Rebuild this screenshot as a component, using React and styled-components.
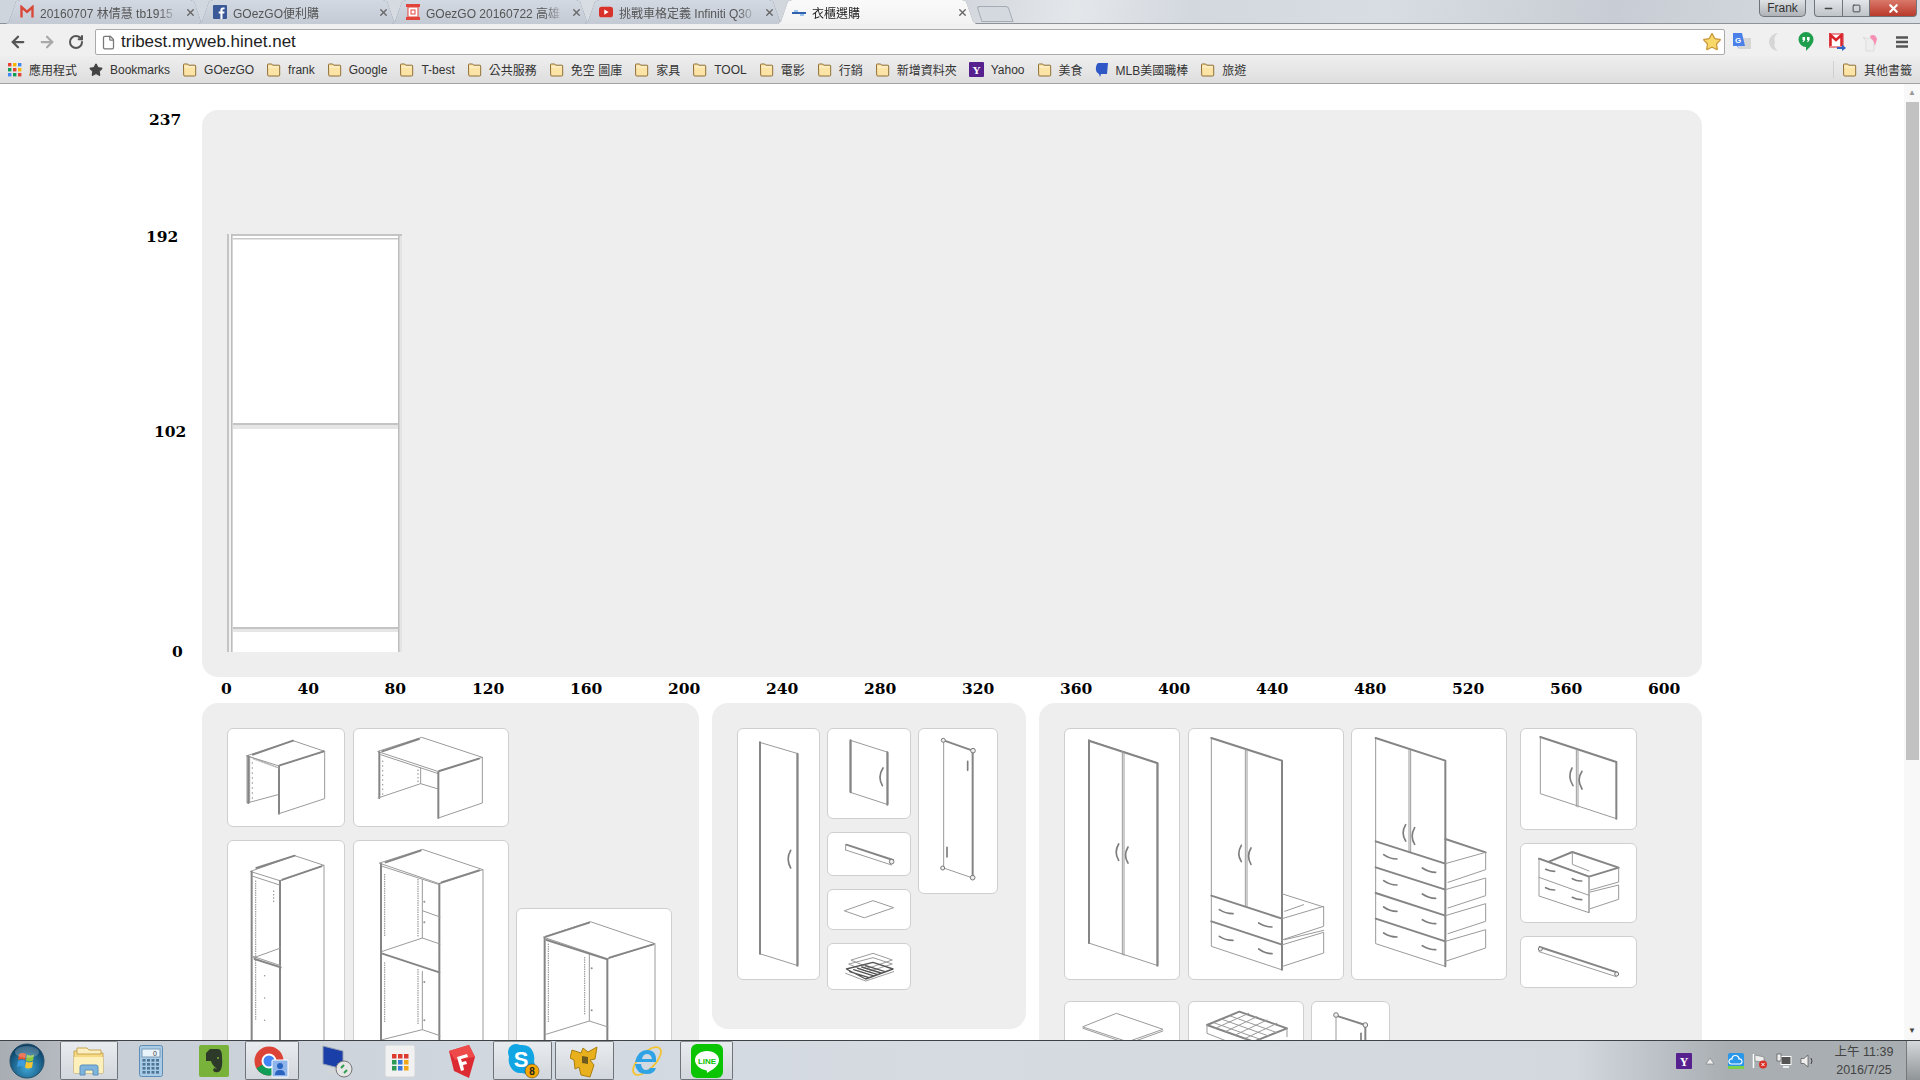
import React from 'react';
import styled, { createGlobalStyle } from 'styled-components';
import { ArrowLeft, ArrowRight, RotateCw, Star, File, X, Minus, Square } from 'lucide-react';

const GlobalStyle = createGlobalStyle`
  html, body { margin: 0; padding: 0; height: 100%; overflow: hidden; background: #fff; }
  * { box-sizing: border-box; }
  body { font-family: "Liberation Sans", "Noto Sans CJK TC", sans-serif; color: #222; }
`;

const Screen = styled.div`
  width: 1920px;
  height: 1080px;
  display: flex;
  flex-direction: column;
  overflow: hidden;
`;

/* ---------- browser chrome ---------- */
const TabStrip = styled.div`
  height: 24px;
  flex: none;
  display: flex;
  padding-left: 6px;
  background: linear-gradient(103deg, #cfd5dd 0%, #d8dde3 30%, #cdd2d9 48%, #e4e7ea 56%, #d3d8df 62%, #d8dde3 72%, #c8cdd5 84%, #dadfe5 100%);
  border-bottom: 1px solid #8d9298;
`;

const Tab = styled.div`
  position: relative;
  width: 198px;
  height: 24px;
  margin-right: -5px;
  padding: 0 8px 0 14px;
  display: flex;
  align-items: center;
  gap: 6px;
  font-size: 12px;
  color: ${({ $active }) => ($active ? '#222' : '#555')};
  z-index: ${({ $active }) => ($active ? 2 : 1)};
  filter: drop-shadow(0 0 0.6px #737a84);
  &::before {
    content: '';
    position: absolute;
    inset: 0;
    z-index: -1;
    background: ${({ $active }) => ($active ? 'linear-gradient(#fafafa, #f2f2f2)' : 'linear-gradient(#d3d9e2, #c3cad4)')};
    clip-path: polygon(0 100%, 3px 90%, 10px 6%, 14px 0, calc(100% - 14px) 0, calc(100% - 10px) 6%, calc(100% - 3px) 90%, 100% 100%);
  }
`;

const TabTitle = styled.span`
  flex: 1;
  overflow: hidden;
  white-space: nowrap;
  -webkit-mask-image: linear-gradient(90deg, #000 85%, transparent);
  mask-image: linear-gradient(90deg, #000 85%, transparent);
`;

const NewTab = styled.div`
  width: 32px;
  height: 16px;
  margin: 6px 0 0 8px;
  background: #d4d9e0;
  border: 1px solid #a5abb3;
  border-top-left-radius: 3px;
  border-top-right-radius: 3px;
  transform: skewX(18deg);
`;

const WindowControls = styled.div`
  margin-left: auto;
  margin-right: 3px;
  display: flex;
  align-items: flex-start;
`;

const ProfileButton = styled.div`
  width: 47px;
  height: 17px;
  margin-right: 8px;
  font-size: 12px;
  line-height: 16px;
  text-align: center;
  color: #333;
  background: linear-gradient(#dfe2e5, #aeb2b6);
  border: 1px solid #6f747a;
  border-top: 0;
  border-radius: 0 0 5px 5px;
`;

const ControlButton = styled.div`
  width: ${({ $w }) => $w}px;
  height: 17px;
  display: flex;
  align-items: center;
  justify-content: center;
  color: ${({ $close }) => ($close ? '#fff' : '#444')};
  background: ${({ $close }) => ($close ? 'linear-gradient(#d9786a, #b93a2b)' : 'linear-gradient(#e3e6e9, #bfc4c9)')};
  border: 1px solid #70757b;
  border-top: 0;
  border-left-width: ${({ $first }) => ($first ? 1 : 0)}px;
  border-radius: ${({ $first, $close }) => ($first ? '0 0 0 4px' : $close ? '0 0 4px 0' : '0')};
`;

const Toolbar = styled.div`
  height: 32px;
  flex: none;
  display: flex;
  align-items: center;
  padding: 4px 0 0 3px;
  background: #f0f0f0;
`;

const NavButton = styled.div`
  width: 29px;
  display: flex;
  align-items: center;
  justify-content: center;
  color: ${({ $muted }) => ($muted ? '#a9a9a9' : '#555')};
`;

const Omnibox = styled.div`
  width: 1630px;
  height: 26px;
  margin-left: 5px;
  padding: 0 2px 0 5px;
  display: flex;
  align-items: center;
  gap: 5px;
  font-size: 17px;
  color: #222;
  background: #fff;
  border: 1px solid #aaa;
  border-radius: 2px;
  svg:last-child { margin-left: auto; }
`;

const Extensions = styled.div`
  display: flex;
  align-items: center;
  margin-left: 1px;
`;

const ExtensionSlot = styled.div`
  width: 32px;
  display: flex;
  align-items: center;
  justify-content: center;
`;

const BookmarkBar = styled.div`
  height: 28px;
  flex: none;
  display: flex;
  align-items: center;
  gap: 12px;
  padding: 0 8px 0 7px;
  font-size: 12px;
  color: #333;
  background: linear-gradient(#eeeeee, #dedede);
  border-bottom: 1px solid #a2a2a2;
`;

const Bookmark = styled.div`
  display: flex;
  align-items: center;
  gap: 7px;
  white-space: nowrap;
`;

const OtherBookmarks = styled(Bookmark)`
  margin-left: auto;
  padding-left: 8px;
  border-left: 1px solid #d0d0d0;
`;

/* ---------- page ---------- */
const Viewport = styled.div`
  flex: 1;
  min-height: 0;
  display: flex;
  overflow: hidden;
  background: #fff;
`;

const Page = styled.main`
  width: 1904px;
  flex: none;
  padding-top: 26px;
`;

const PlannerRow = styled.div`
  display: flex;
`;

const YAxis = styled.div`
  width: 202px;
  flex: none;
`;

const AxisLabel = styled.div`
  font-family: "DejaVu Serif", "Liberation Serif", serif;
  font-weight: 700;
  font-size: 15.5px;
  line-height: 18px;
  color: #000;
`;

const YLabel = styled(AxisLabel)`
  margin-top: ${({ $gap }) => $gap}px;
  padding-left: ${({ $x }) => $x}px;
  position: relative;
  top: 1px;
`;

const Canvas = styled.div`
  width: 1500px;
  height: 567px;
  padding: 124px 0 0 25px;
  background: #eeeeee;
  border-radius: 16px;
`;

const XAxis = styled.div`
  height: 26px;
  padding: 3px 0 0 221px;
  display: flex;
`;

const XTick = styled(AxisLabel)`
  width: ${({ $w }) => $w}px;
  flex: none;
`;

const PartsRow = styled.div`
  display: flex;
  align-items: flex-start;
  gap: 13px;
  margin-left: 202px;
`;

const PartsPanel = styled.section`
  width: ${({ $w }) => $w}px;
  padding: 25px 25px ${({ $pb }) => $pb}px;
  flex: none;
  display: flex;
  flex-direction: ${({ $row }) => ($row ? 'row' : 'column')};
  gap: ${({ $row }) => ($row ? 7 : 13)}px;
  background: #eeeeee;
  border-radius: 16px;
`;

const PartsLine = styled.div`
  display: flex;
  align-items: ${({ $end }) => ($end ? 'flex-end' : 'flex-start')};
  gap: 7.5px;
`;

const PartsColumn = styled.div`
  display: flex;
  flex-direction: column;
  gap: 13px;
  margin-left: ${({ $ml }) => $ml || 0}px;
`;

const PartCard = styled.div`
  width: ${({ $w }) => $w}px;
  height: ${({ $h }) => $h}px;
  flex: none;
  background: #fff;
  border: 1px solid #cfcfcf;
  border-radius: 6px;
  overflow: hidden;
`;

const PartSvg = styled.svg`
  display: block;
  margin: -1px;
  width: ${({ $w }) => $w}px;
  height: ${({ $h }) => $h}px;
  filter: blur(0.4px);
  path, line { fill: none; stroke: #9a9a9a; stroke-width: 3; stroke-linejoin: round; stroke-linecap: round; }
  path.thick { stroke: #858585; stroke-width: 6; }
  path.soft { stroke: #c4c4c4; stroke-width: 3; }
  path.handle { stroke: #7d7d7d; stroke-width: 5; }
  path.dark { stroke: #555; stroke-width: 4; }
  circle { fill: #8f8f8f; stroke: none; }
  circle.cap { fill: #eee; stroke: #777; stroke-width: 3; }
`;

const Scrollbar = styled.div`
  width: 16px;
  flex: none;
  display: flex;
  flex-direction: column;
  align-items: center;
  background: #f8f8f8;
  font-size: 8px;
  color: #555;
`;

const ScrollArrow = styled.div`
  height: 18px;
  line-height: 18px;
  color: ${({ $muted }) => ($muted ? '#999' : '#444')};
`;

const ScrollThumb = styled.div`
  width: 13px;
  height: 658px;
  background: #c2c2c2;
`;

const ScrollTrack = styled.div`
  flex: 1;
`;

/* ---------- taskbar ---------- */
const Taskbar = styled.footer`
  height: 40px;
  flex: none;
  display: flex;
  align-items: stretch;
  background: linear-gradient(90deg, #c5ccd4 0%, #d3d9e1 30%, #d6dbe2 50%, #d3d8df 82%, #a8aeb2 90%, #a9aeb1 100%);
  border-top: 1px solid #3e4247;
`;

const StartSlot = styled.div`
  width: 60px;
  padding-right: 6px;
  flex: none;
  display: flex;
  align-items: center;
  justify-content: center;
  background: linear-gradient(90deg, #a7adb2, #b4bac0);
`;

const TaskSlot = styled.div`
  width: ${({ $w }) => $w}px;
  margin-right: ${({ $mr }) => $mr || 0}px;
  flex: none;
  display: flex;
  align-items: center;
  justify-content: center;
  ${({ $active }) => $active && `
    background: linear-gradient(#e9ecef, #d2d7dd);
    border: 1px solid #6e7479;
    border-top-color: #8b9095;
    border-radius: 2px;
  `}
`;

const Tray = styled.div`
  margin-left: auto;
  display: flex;
  align-items: center;
  gap: 8px;
`;

const TrayArrowSlot = styled.div`
  margin: 0 5px;
  display: flex;
`;

const Clock = styled.div`
  width: 62px;
  margin-left: 9px;
  font-size: 12.5px;
  line-height: 18px;
  text-align: center;
  white-space: nowrap;
  color: #444;
`;

const ShowDesktop = styled.div`
  width: 14px;
  align-self: stretch;
  margin-left: 3px;
  background: linear-gradient(#d5d8da, #8f9497);
  border-left: 1px solid #777;
`;

/* ---------- small drawings ---------- */
const Folder = () => (
  <svg width="15" height="14" viewBox="0 0 15 14">
    <path d="M1.5 3V1.8Q1.5 1 2.3 1h3.4l1 1.2h6.2q.8 0 .8.8V12q0 1-1 1h-10q-1 0-1-1z" fill="#fce3a6" stroke="#8f6f37" />
    <path d="M2.5 4h10" stroke="#fff6dc" />
  </svg>
);

const AppsIcon = () => (
  <svg width="15" height="15" viewBox="0 0 15 15">
    {['#e34234', '#f4b400', '#4285f4', '#0f9d58', '#e34234', '#f4b400', '#4285f4', '#0f9d58', '#e34234'].map((c, i) => (
      <rect key={i} x={1 + (i % 3) * 5} y={1 + Math.floor(i / 3) * 5} width="3.4" height="3.4" fill={c} />
    ))}
  </svg>
);

const GmailIcon = ({ size = 14 }) => (
  <svg width={size} height={size} viewBox="0 0 14 14">
    <path d="M1.5 12.5V2l5.5 5 5.500-5v10.500" fill="none" stroke="#d9493a" strokeWidth="2.4" />
  </svg>
);

const FacebookIcon = () => (
  <svg width="14" height="14" viewBox="0 0 14 14">
    <rect width="14" height="14" rx="1" fill="#3b5998" />
    <path d="M9.5 14V8.5h1.700l.3-2H9.500V5.200q0-.9 1-.9h1.100V2.500H10Q7.400 2.500 7.400 5v1.500H5.700v2h1.700V14z" fill="#fff" />
  </svg>
);

const RedSealIcon = () => (
  <svg width="14" height="16" viewBox="0 0 14 16">
    <rect x="0" y="0" width="14" height="3" fill="#e2443c" />
    <rect x="0" y="13" width="14" height="3" fill="#e2443c" />
    <rect x="2" y="3" width="10" height="10" fill="#fff" stroke="#e2443c" />
    <rect x="5" y="6" width="4" height="4" fill="none" stroke="#e2443c" />
  </svg>
);

const YoutubeIcon = () => (
  <svg width="14" height="14" viewBox="0 0 16 14">
    <rect y="1" width="16" height="12" rx="3" fill="#d8322a" />
    <path d="M6 4l5 3-5 3z" fill="#fff" />
  </svg>
);

const SiteIcon = () => (
  <svg width="14" height="14" viewBox="0 0 14 14">
    <path d="M0 8h14" stroke="#2f5fae" strokeWidth="2" />
    <path d="M2 6h4M8 10h4" stroke="#7fb2e5" strokeWidth="1.400" />
  </svg>
);

const Hamburger = () => (
  <svg width="14" height="14" viewBox="0 0 14 14">
    <path d="M1 2.500h12M1 7h12M1 11.500h12" stroke="#555" strokeWidth="2.600" />
  </svg>
);

const TranslateIcon = () => (
  <svg width="18" height="18" viewBox="0 0 18 18">
    <rect x="6" y="5" width="12" height="11" fill="#d6d6d6" />
    <path d="M0 0h9l3 13H5l1 3-2-3H0z" fill="#4a80e8" />
    <text x="2" y="9.500" fontSize="8" fontWeight="700" fill="#fff" fontFamily="Liberation Sans">G</text>
  </svg>
);

const MoonIcon = () => (
  <svg width="18" height="20" viewBox="0 0 18 20">
    <path d="M13 1a9 9 0 1 0 0 18 7 7 0 0 1-3-9 7 7 0 0 1 3-9z" fill="#d6d6d6" />
  </svg>
);

const HangoutsIcon = () => (
  <svg width="16" height="20" viewBox="0 0 16 20">
    <path d="M8 0a7.500 7.500 0 0 1 7.500 7.500C15.500 12 11 16 8 19v-4A7.500 7.500 0 0 1 8 0z" fill="#1f9e4d" />
    <path d="M4.500 5h2.600v3L5.500 10H4.500l1-2h-1zM9 5h2.600v3L10 10H9l1-2H9z" fill="#fff" />
  </svg>
);

const MailArrowIcon = () => (
  <svg width="18" height="18" viewBox="0 0 18 18">
    <rect x="0" y="1" width="14" height="13" fill="#fff" stroke="#d8232a" strokeWidth="1" />
    <path d="M1.500 13V2l5.500 5 5.500-5v11" fill="none" stroke="#d8232a" strokeWidth="2.500" />
    <path d="M8 14h5v-2.500l4 3.500-4 3V16H8z" fill="#2f64c4" />
  </svg>
);

const UnicornIcon = () => (
  <svg width="16" height="20" viewBox="0 0 16 20">
    <path d="M4 19V9L1 5l5 2 3-2 3 4v10z" fill="#eee" stroke="#ddd" />
    <path d="M8 4q5-3 7 3l-2 7q-1-6-4-7z" fill="#f58fb4" />
  </svg>
);

const YahooBadge = ({ size = 16 }) => (
  <svg width={size} height={size} viewBox="0 0 16 16">
    <rect width="16" height="16" rx="1" fill="#56208f" />
    <text x="8" y="12.500" textAnchor="middle" fontSize="12" fontWeight="700" fill="#fff" fontFamily="Liberation Serif">Y</text>
  </svg>
);

const MlbIcon = () => (
  <svg width="14" height="16" viewBox="0 0 14 16">
    <path d="M3 1h10l-1 11H6l-1 3-1-3Q0 10 1 5q.500-3 2-4z" fill="#2f57c6" />
  </svg>
);

const StartOrb = () => (
  <svg width="36" height="36" viewBox="0 0 36 36">
    <defs>
      <radialGradient id="orb" cx="50%" cy="70%" r="65%">
        <stop offset="0" stopColor="#3fa7d8" />
        <stop offset="1" stopColor="#0b3f63" />
      </radialGradient>
    </defs>
    <circle cx="18" cy="18" r="17" fill="url(#orb)" stroke="#254e68" />
    <path d="M10 11q4-2 7 0l-1 6q-3-2-7 0z" fill="#e8552d" />
    <path d="M18 11.500q3 2 7 0l-1 6q-4 2-7 0z" fill="#8cc63f" />
    <path d="M9 18q4-2 7 0l-1 6q-3-2-7 0z" fill="#3d9be0" />
    <path d="M17 18.500q3 2 7 0l-1 6q-4 2-7 0z" fill="#f7c531" />
    <ellipse cx="18" cy="9" rx="12" ry="6" fill="#fff" opacity=".22" />
  </svg>
);

const ExplorerIcon = () => (
  <svg width="34" height="32" viewBox="0 0 34 32">
    <path d="M2 6h11l2 2h16v20H2z" fill="#f5d983" stroke="#c7a552" />
    <path d="M5 3h10l2 2h12v4H5z" fill="#fbeec0" stroke="#c7a552" />
    <path d="M2 12h29v16H2z" fill="#fdf0bb" />
    <path d="M8 30V22q0-2 2-2h14q2 0 2 2v8h-5v-5h-8v5z" fill="#7fb5dd" stroke="#5a90bb" />
  </svg>
);

const CalcIcon = () => (
  <svg width="24" height="32" viewBox="0 0 24 32">
    <rect x=".5" y=".5" width="23" height="31" rx="2" fill="#a9cbe6" stroke="#5e8db5" />
    <rect x="3" y="4" width="18" height="8" fill="#e9f3fa" stroke="#7a9cb9" />
    <text x="18" y="11" fontSize="7" textAnchor="end" fill="#444" fontFamily="Liberation Sans">0</text>
    {Array.from({ length: 16 }).map((_, i) => (
      <rect key={i} x={3.500 + (i % 4) * 4.500} y={14 + Math.floor(i / 4) * 4} width="3" height="2.600" fill="#4d7596" />
    ))}
  </svg>
);

const EvernoteIcon = () => (
  <svg width="30" height="32" viewBox="0 0 30 32">
    <rect width="30" height="32" rx="2" fill="#79b23a" />
    <path d="M7 8l4-4h8q4 0 4 8 1 10-2 14-2 2-5 1-3-1-1-4l3 1q-5-4-6-8H7z" fill="#2d3a2a" />
    <circle cx="19" cy="13" r="1" fill="#79b23a" />
  </svg>
);

const ChromeIcon = () => (
  <svg width="36" height="34" viewBox="0 0 36 34">
    <circle cx="15" cy="17" r="14.500" fill="#dc4437" />
    <path d="M15 17L2.500 24.200A14.500 14.500 0 0 0 22 29.700z" fill="#0f9d58" />
    <path d="M15 17h14.500A14.500 14.500 0 0 1 22 29.700z" fill="#f4b400" />
    <circle cx="15" cy="17" r="6.500" fill="#4285f4" stroke="#fff" strokeWidth="2" />
    <rect x="18" y="16" width="16" height="17" rx="1" fill="#8fb4ea" stroke="#fff" />
    <circle cx="26" cy="22" r="3" fill="#2a62c0" />
    <path d="M21 31q0-5 5-5t5 5z" fill="#2a62c0" />
  </svg>
);

const RemoteIcon = () => (
  <svg width="34" height="34" viewBox="0 0 34 34">
    <path d="M3 2l20 5v18L3 20z" fill="#1a3fa8" stroke="#99a3b3" />
    <path d="M10 24l8 2-2 4-9-2z" fill="#d2d5d8" />
    <circle cx="24" cy="25" r="8" fill="#e6e6e6" stroke="#777" />
    <path d="M21 24l3-3M24 29l3-3" stroke="#2e9e4e" strokeWidth="2" />
  </svg>
);

const AppGridIcon = () => (
  <svg width="30" height="32" viewBox="0 0 30 32">
    <rect width="30" height="32" rx="2" fill="#f1f1f1" stroke="#d4d4d4" />
    {['#dd3a30', '#dd3a30', '#dd3a30', '#2a9a54', '#3b79d8', '#f2a818', '#2a9a54', '#3b79d8', '#f2a818'].map((c, i) => (
      <rect key={i} x={7 + (i % 3) * 6} y={9 + Math.floor(i / 3) * 6} width="4.500" height="4.500" fill={c} />
    ))}
  </svg>
);

const SketchupIcon = () => (
  <svg width="28" height="34" viewBox="0 0 28 34">
    <path d="M1 7L21 1l6 12-6 21L6 27z" fill="#dc2a32" />
    <path d="M1 7l20-6 6 12-20 3z" fill="#ee4a4a" />
    <path d="M9 13l10-3 1 3-7 2 1 3 4-1 1 3-4 1 1 5-3 1z" fill="#fff" />
  </svg>
);

const SkypeIcon = () => (
  <svg width="34" height="36" viewBox="0 0 34 36">
    <path d="M6 2q4-2 8 0 10-1 13 7 2 5 1 9 2 6-2 10t-10 2Q8 31 4 23 2 19 3 14 0 6 6 2z" fill="#12a5e4" />
    <text x="15" y="24" textAnchor="middle" fontSize="22" fontWeight="700" fill="#fff" fontFamily="Liberation Sans">S</text>
    <circle cx="26" cy="28" r="7" fill="#f6a800" stroke="#333" strokeWidth=".5" />
    <text x="26" y="32" textAnchor="middle" fontSize="10" fontWeight="700" fill="#222" fontFamily="Liberation Sans">8</text>
  </svg>
);

const PuzzleIcon = () => (
  <svg width="30" height="34" viewBox="0 0 30 34">
    <path d="M2 6l9 3 2-5 5 4 9-5-2 12-5 1 4 5-4 12-9-2-2-8-4 2-1-9-4-2z" fill="#e8b01d" stroke="#a97e10" />
    <path d="M12 12l6 1v7l-6-1z" fill="#6c5a1e" />
  </svg>
);

const IeIcon = () => (
  <svg width="34" height="36" viewBox="0 0 34 36">
    <ellipse cx="17" cy="18" rx="18" ry="8" transform="rotate(-45 17 18)" fill="none" stroke="#f4c430" strokeWidth="1.800" />
    <path d="M5 19h21q1-12-9-12-9 0-12 12zm7-3q1-5 5-5t5 5zM5 21q1 10 12 10 7 0 9-6h-6q-1 2-4 2-4 0-5-6z" fill="#2fa3e6" />
  </svg>
);

const LineIcon = () => (
  <svg width="32" height="34" viewBox="0 0 32 34">
    <rect width="32" height="34" rx="6" fill="#0bc403" />
    <path d="M16 7c7 0 12 4 12 9 0 6-7 10-12 13 0-2 0-3-2-3-5-1-10-5-10-10 0-5 5-9 12-9z" fill="#fff" />
    <text x="16" y="20" textAnchor="middle" fontSize="8" fontWeight="700" fill="#0bc403" fontFamily="Liberation Sans">LINE</text>
  </svg>
);

const TrayCloud = () => (
  <svg width="16" height="16" viewBox="0 0 16 16">
    <rect width="16" height="16" rx="2" fill="#2a97e8" />
    <rect y="13" width="16" height="3" fill="#7bd24a" />
    <path d="M3 11a2.500 2.500 0 0 1 1-5 3.500 3.500 0 0 1 7 0 2.500 2.500 0 0 1 1 5z" fill="none" stroke="#fff" strokeWidth="1.200" />
  </svg>
);

const TrayFlag = () => (
  <svg width="16" height="16" viewBox="0 0 16 16">
    <path d="M1.500 1v14" stroke="#fff" strokeWidth="1.500" />
    <path d="M3 2l9 2v5l-9-1z" fill="#eee" stroke="#666" strokeWidth=".5" />
    <circle cx="11" cy="11.500" r="4" fill="#d9342b" />
    <path d="M9.500 10l3 3m0-3l-3 3" stroke="#fff" />
  </svg>
);

const TrayNetwork = () => (
  <svg width="16" height="16" viewBox="0 0 16 16">
    <rect x="5" y="3.500" width="10" height="8" fill="#555" stroke="#fff" />
    <path d="M7 14h6" stroke="#fff" strokeWidth="1.500" />
    <rect x="1" y="1" width="4" height="7" fill="#eee" stroke="#444" strokeWidth=".6" />
  </svg>
);

const TraySpeaker = () => (
  <svg width="16" height="16" viewBox="0 0 16 16">
    <path d="M1 5.500h3L8 2v12l-4-3.500H1z" fill="#eee" stroke="#555" strokeWidth=".7" />
    <path d="M11 5q2 3 0 6" fill="none" stroke="#444" />
  </svg>
);

const TrayArrow = () => (
  <svg width="10" height="8" viewBox="0 0 10 8">
    <path d="M5 1l4 6H1z" fill="#eee" stroke="#666" strokeWidth=".5" />
  </svg>
);

/* ---------- furniture line drawings, coordinates are the 3x crop of the card ---------- */
const Part = ({ w, h, x, y, children }) => (
  <PartCard $w={w} $h={h}>
    <PartSvg $w={w} $h={h} viewBox={`${x} ${y} ${w * 3} ${h * 3}`}>{children}</PartSvg>
  </PartCard>
);

const Dots = ({ x, y, n, step, r = 2.200 }) => (
  <>
    {Array.from({ length: n }).map((_, i) => (
      <circle key={i} cx={x} cy={y + i * step} r={r} />
    ))}
  </>
);

const Handles = ({ a, b }) => (
  <>
    <path className="handle" d={a} />
    <path className="handle" d={b} />
  </>
);

const Cabinet = () => (
  <svg width="175" height="418" viewBox="0 0 175 418" style={{ display: 'block' }}>
    <rect x="6" y="0" width="165" height="418" fill="#fff" />
    <rect x="171" y="0" width="4" height="418" fill="#e4e4e4" />
    <rect x="0" y="0" width="175" height="2" fill="#c4c4c4" />
    <rect x="0" y="0" width="2" height="418" fill="#c4c4c4" />
    <rect x="2" y="0" width="2" height="418" fill="#f2f2f2" />
    <rect x="4" y="0" width="1.500" height="418" fill="#bdbdbd" />
    <rect x="171" y="2" width="1.500" height="416" fill="#bdbdbd" />
    <rect x="6" y="4" width="165" height="1.500" fill="#c9c9c9" />
    <rect x="6" y="189" width="165" height="2" fill="#c4c4c4" />
    <rect x="6" y="191" width="165" height="4" fill="#e6e6e6" />
    <rect x="6" y="393" width="165" height="2" fill="#c4c4c4" />
    <rect x="6" y="395" width="165" height="3" fill="#e6e6e6" />
  </svg>
);

const yLabels = [
  { text: '237', gap: 0, x: 149 },
  { text: '192', gap: 99, x: 146 },
  { text: '102', gap: 177, x: 154 },
  { text: '0', gap: 202, x: 172 }
];

const xTicks = [
  ['0', 76.500], ['40', 87], ['80', 87.500], ['120', 98], ['160', 98], ['200', 98], ['240', 98], ['280', 98],
  ['320', 98], ['360', 98], ['400', 98], ['440', 98], ['480', 98], ['520', 98], ['560', 98], ['600', 98]
];

const bookmarks = [
  { label: 'GOezGO' }, { label: 'frank' }, { label: 'Google' }, { label: 'T-best' }, { label: '公共服務' },
  { label: '免空 圖庫' }, { label: '家具' }, { label: 'TOOL' }, { label: '電影' }, { label: '行銷' },
  { label: '新增資料夾' }, { label: 'Yahoo', icon: <YahooBadge size={15} /> }, { label: '美食' },
  { label: 'MLB美國職棒', icon: <MlbIcon /> }, { label: '旅遊' }
];

const tabs = [
  { title: '20160707 林倩慧 tb1915', icon: <GmailIcon /> },
  { title: 'GOezGO便利購', icon: <FacebookIcon /> },
  { title: 'GOezGO 20160722 高雄', icon: <RedSealIcon /> },
  { title: '挑戰車格定義 Infiniti Q30', icon: <YoutubeIcon /> },
  { title: '衣櫃選購', icon: <SiteIcon />, active: true }
];

const extensions = [TranslateIcon, MoonIcon, HangoutsIcon, MailArrowIcon, UnicornIcon, Hamburger];

const App = () => (
  <Screen>
    <GlobalStyle />
    <TabStrip>
      {tabs.map(tab => (
        <Tab key={tab.title} $active={tab.active}>
          {tab.icon}
          <TabTitle>{tab.title}</TabTitle>
          <X size={11} strokeWidth={3} color="#666" />
        </Tab>
      ))}
      <NewTab />
      <WindowControls>
        <ProfileButton>Frank</ProfileButton>
        <ControlButton $w={29} $first><Minus size={11} strokeWidth={3} /></ControlButton>
        <ControlButton $w={27}><Square size={9} strokeWidth={2.500} /></ControlButton>
        <ControlButton $w={47} $close><X size={13} strokeWidth={4} /></ControlButton>
      </WindowControls>
    </TabStrip>

    <Toolbar>
      <NavButton><ArrowLeft size={18} strokeWidth={3} /></NavButton>
      <NavButton $muted><ArrowRight size={18} strokeWidth={3} /></NavButton>
      <NavButton><RotateCw size={16} strokeWidth={3} /></NavButton>
      <Omnibox>
        <File size={15} color="#777" />
        tribest.myweb.hinet.net
        <Star size={20} fill="#f8d868" color="#c9963a" strokeWidth={1.500} />
      </Omnibox>
      <Extensions>
        {extensions.map((Icon, i) => (
          <ExtensionSlot key={i}><Icon /></ExtensionSlot>
        ))}
      </Extensions>
    </Toolbar>

    <BookmarkBar>
      <Bookmark><AppsIcon />應用程式</Bookmark>
      <Bookmark><Star size={14} fill="#444" color="#444" />Bookmarks</Bookmark>
      {bookmarks.map(b => (
        <Bookmark key={b.label}>{b.icon || <Folder />}{b.label}</Bookmark>
      ))}
      <OtherBookmarks><Folder />其他書籤</OtherBookmarks>
    </BookmarkBar>

    <Viewport>
      <Page>
        <PlannerRow>
          <YAxis>
            {yLabels.map(l => (
              <YLabel key={l.text} $gap={l.gap} $x={l.x}>{l.text}</YLabel>
            ))}
          </YAxis>
          <Canvas><Cabinet /></Canvas>
        </PlannerRow>
        <XAxis>
          {xTicks.map(([text, w]) => (
            <XTick key={text} $w={w}>{text}</XTick>
          ))}
        </XAxis>

        <PartsRow>
          <PartsPanel $w={497} $pb={25}>
            <PartsLine>
              <Part w={118} h={99} x={82} y={85}>
                <path d="M142 168L280 123L375 155L238 198Z" />
                <path className="thick" d="M160 165L280 123M240 197L372 155" />
                <path d="M142 168V310L235 285M150 172V308M142 168L238 205" />
                <path className="thick" d="M146 170V310M238 200V342" />
                <path d="M238 342L375 297V155" />
                <path className="soft" d="M160 178L236 205" />
                <Dots x={158} y={190} n={8} step={15} />
              </Part>
              <Part w={156} h={99} x={457} y={85}>
                <path d="M532 155L663 113L845 173L713 215Z" />
                <path className="thick" d="M545 155L655 118M716 214L835 177" />
                <path className="thick" d="M536 158V295" />
                <path d="M532 295L660 252V205M660 252L713 268M540 165L713 222" />
                <path className="thick" d="M713 218V355" />
                <path d="M713 355L845 310V173" />
                <Dots x={546} y={185} n={8} step={14} />
                <Dots x={652} y={212} n={4} step={11} />
              </Part>
            </PartsLine>
            <PartsLine $end>
              <Part w={118} h={251} x={82} y={421}>
                <path d="M153 515L285 468L373 497L243 543Z" />
                <path className="thick" d="M170 505L285 468M248 540L365 500" />
                <path className="thick" d="M156 516V1177M241 543V1177" />
                <path d="M373 497V1177M160 530L240 556" />
                <path d="M160 775L243 745M160 770L243 798" />
                <path className="thick" d="M165 778L243 803" />
                <Dots x={168} y={545} n={60} step={7} />
                <Dots x={222} y={575} n={4} step={10} />
                <Dots x={195} y={828} n={3} step={67} />
              </Part>
              <Part w={156} h={251} x={457} y={421}>
                <path d="M537 490L665 449L847 510L718 552Z" />
                <path className="thick" d="M555 488L660 453M722 548L835 512" />
                <path className="thick" d="M541 493V1177M716 552V1177" />
                <path d="M847 510V1177M665 540V715M545 755L665 715L718 733M665 633L718 652M665 815V990M545 1020L665 990L718 1008" />
                <path className="thick" d="M545 762L716 818" />
                <path d="M545 500L716 555" />
                <Dots x={552} y={525} n={27} step={7} />
                <Dots x={652} y={540} n={25} step={7} />
                <Dots x={552} y={790} n={26} step={7} />
                <Dots x={652} y={810} n={24} step={7} />
                <circle cx={671} cy={606} r={3} />
                <circle cx={671} cy={668} r={3} />
                <circle cx={671} cy={847} r={3} />
                <circle cx={671} cy={962} r={3} />
              </Part>
              <Part w={156} h={183} x={950} y={626}>
                <path d="M1033 713L1173 667L1367 733L1226 778Z" />
                <path className="thick" d="M1040 712L1170 670M1230 775L1362 735" />
                <path className="thick" d="M1036 716V1110M1224 780V1170" />
                <path d="M1367 733V1120M1170 765V965M1040 1005L1170 965L1226 983" />
                <path className="thick" d="M1042 722L1224 780" />
                <Dots x={1047} y={735} n={34} step={7} />
                <Dots x={1156} y={775} n={25} step={7} />
                <circle cx={1177} cy={807} r={3} />
                <circle cx={1177} cy={933} r={3} />
              </Part>
            </PartsLine>
          </PartsPanel>

          <PartsPanel $w={314} $pb={39} $row>
            <Part w={83} h={252} x={82} y={85}>
              <path d="M150 128L265 162V798L150 762Z" />
              <path className="thick" d="M151 128V762M263 162V798" />
              <path className="handle" d="M243 452Q228 478 243 505" />
            </Part>
            <PartsColumn>
              <Part w={84} h={91} x={352} y={85}>
                <path d="M422 122L535 158V315L422 278Z" />
                <path className="thick" d="M423 122V278M533 158V315" />
                <path className="handle" d="M520 205Q503 232 518 258" />
              </Part>
              <Part w={84} h={44} x={352} y={398}>
                <path className="thick" d="M410 436L550 482" />
                <path d="M408 452L546 497M408 436V452" />
                <circle className="cap" cx={546} cy={487} r={7} />
              </Part>
              <Part w={84} h={41} x={352} y={572}>
                <path d="M405 637L490 607L552 628L465 658Z" />
              </Part>
              <Part w={84} h={47} x={352} y={734}>
                <path d="M425 785L490 765L548 785L480 808Z" />
                <path d="M418 797L490 778L548 797L475 820Z" />
                <path className="dark" d="M410 812L490 792L550 812L468 842ZM420 820L478 838M432 814L490 832M444 810L502 828M456 806L514 824M468 802L526 820" />
                <path d="M408 825L468 848L552 820" />
              </Part>
            </PartsColumn>
            <Part w={80} h={166} x={626} y={85}>
              <path d="M703 122V505L790 535" />
              <path className="thick" d="M703 122L790 153V535" />
              <path className="handle" d="M775 185V212M713 443V472" />
              <circle className="cap" cx={702} cy={122} r={6} />
              <circle className="cap" cx={791} cy={153} r={7} />
              <circle className="cap" cx={700} cy={505} r={6} />
              <circle className="cap" cx={790} cy={534} r={7} />
            </Part>
          </PartsPanel>

          <PartsPanel $w={663} $pb={25}>
            <PartsLine>
              <Part w={116} h={252} x={73} y={85}>
                <path d="M147 122L355 190V798L147 730Z" />
                <path className="thick" d="M148 122V730M353 190V798M150 124L352 190" />
                <path d="M248 155V765M253 157V767" />
                <Handles a="M237 433Q222 458 237 482" b="M265 442Q250 468 265 490" />
              </Part>
              <Part w={156} h={252} x={443} y={85}>
                <path d="M513 115V740L723 810" />
                <path className="thick" d="M513 115L725 183V810" />
                <path d="M615 150V618M620 152V620" />
                <path className="thick" d="M513 588L725 657M513 665L725 735" />
                <path d="M725 657L850 620V680L727 720M727 583L850 622M733 635L790 615" />
                <path d="M727 735L850 698V760L727 800M733 720L850 692" />
                <Handles a="M603 437Q588 462 603 486" b="M632 445Q617 470 632 494" />
                <Handles a="M537 630Q555 642 578 642" b="M655 670Q675 682 695 682" />
                <Handles a="M537 710Q555 722 578 722" b="M655 748Q675 762 695 762" />
              </Part>
              <Part w={156} h={252} x={934} y={85}>
                <path d="M1008 115V732L1217 800" />
                <path className="thick" d="M1008 115L1217 183V800" />
                <path d="M1108 150V455M1113 152V457" />
                <path className="thick" d="M1008 425L1217 492M1008 503L1217 570M1008 580L1217 648M1008 657L1217 725" />
                <path className="thick" d="M1217 418L1338 458" />
                <path d="M1217 492L1338 458V510L1225 548M1217 570L1338 535V588L1225 625M1217 648L1338 612V665L1225 702M1217 725L1338 690V745L1217 785" />
                <Handles a="M1098 375Q1083 400 1098 424" b="M1125 384Q1110 410 1125 434" />
                <Handles a="M1032 465Q1050 478 1072 478" b="M1148 505Q1168 518 1188 518" />
                <Handles a="M1032 543Q1050 556 1072 556" b="M1148 583Q1168 596 1188 596" />
                <Handles a="M1032 622Q1050 635 1072 635" b="M1148 660Q1168 672 1188 672" />
                <Handles a="M1032 700Q1050 712 1072 712" b="M1148 738Q1168 750 1188 750" />
              </Part>
              <PartsColumn $ml={5}>
                <Part w={117} h={102} x={61} y={85}>
                  <path d="M122 112V282L350 357" />
                  <path className="thick" d="M122 112L350 187V357" />
                  <path d="M230 150V320M235 152V322" />
                  <Handles a="M217 205Q203 232 220 258" b="M247 215Q230 240 247 268" />
                </Part>
                <Part w={117} h={80} x={61} y={431}>
                  <path d="M118 478V590L268 640V532ZM118 534L268 588" />
                  <path className="thick" d="M118 478L268 532L357 505L218 458L148 487" />
                  <path d="M218 458V495L268 515M268 532V640M357 505V548L272 572M272 578L357 557V600L272 628" />
                  <Handles a="M138 510Q150 516 165 516" b="M218 538Q232 546 246 545" />
                  <Handles a="M138 565Q150 572 165 572" b="M218 594Q232 602 246 601" />
                </Part>
                <Part w={117} h={52} x={61} y={713}>
                  <path className="thick" d="M120 746L352 822" />
                  <path d="M118 760L350 835" />
                  <circle className="cap" cx={122} cy={752} r={6} />
                  <circle className="cap" cx={351} cy={827} r={6} />
                </Part>
              </PartsColumn>
            </PartsLine>
            <PartsLine>
              <Part w={116} h={90} x={73} y={908}>
                <path d="M130 985L230 945L370 993L265 1030Z" />
                <path d="M130 990L265 1036L370 998" />
              </Part>
              <Part w={116} h={90} x={443} y={908}>
                <path className="thick" d="M500 980L597 940L740 990L640 1030Z" />
                <path d="M520 973L660 1023M545 963L685 1013M570 953L710 1003M525 990L625 945M555 1000L650 955M585 1010L680 965M615 1020L710 975" />
                <path d="M500 980V1005L640 1060M740 990V1015" />
              </Part>
              <Part w={79} h={90} x={815} y={908}>
                <path d="M890 952V1060" />
                <path className="thick" d="M890 952L978 980V1060" />
                <path className="handle" d="M965 1005V1030" />
                <circle className="cap" cx={890} cy={950} r={7} />
                <circle className="cap" cx={978} cy={980} r={7} />
              </Part>
            </PartsLine>
          </PartsPanel>
        </PartsRow>
      </Page>
      <Scrollbar>
        <ScrollArrow $muted>▲</ScrollArrow>
        <ScrollThumb />
        <ScrollTrack />
        <ScrollArrow>▼</ScrollArrow>
      </Scrollbar>
    </Viewport>

    <Taskbar>
      <StartSlot><StartOrb /></StartSlot>
      <TaskSlot $w={58} $mr={2} $active><ExplorerIcon /></TaskSlot>
      <TaskSlot $w={62}><CalcIcon /></TaskSlot>
      <TaskSlot $w={63}><EvernoteIcon /></TaskSlot>
      <TaskSlot $w={54} $mr={5} $active><ChromeIcon /></TaskSlot>
      <TaskSlot $w={66}><RemoteIcon /></TaskSlot>
      <TaskSlot $w={60}><AppGridIcon /></TaskSlot>
      <TaskSlot $w={63}><SketchupIcon /></TaskSlot>
      <TaskSlot $w={59} $mr={3} $active><SkypeIcon /></TaskSlot>
      <TaskSlot $w={59} $active><PuzzleIcon /></TaskSlot>
      <TaskSlot $w={66}><IeIcon /></TaskSlot>
      <TaskSlot $w={53} $active><LineIcon /></TaskSlot>
      <Tray>
        <YahooBadge />
        <TrayArrowSlot><TrayArrow /></TrayArrowSlot>
        <TrayCloud />
        <TrayFlag />
        <TrayNetwork />
        <TraySpeaker />
        <Clock>上午 11:39<br />2016/7/25</Clock>
        <ShowDesktop />
      </Tray>
    </Taskbar>
  </Screen>
);

export default App;
